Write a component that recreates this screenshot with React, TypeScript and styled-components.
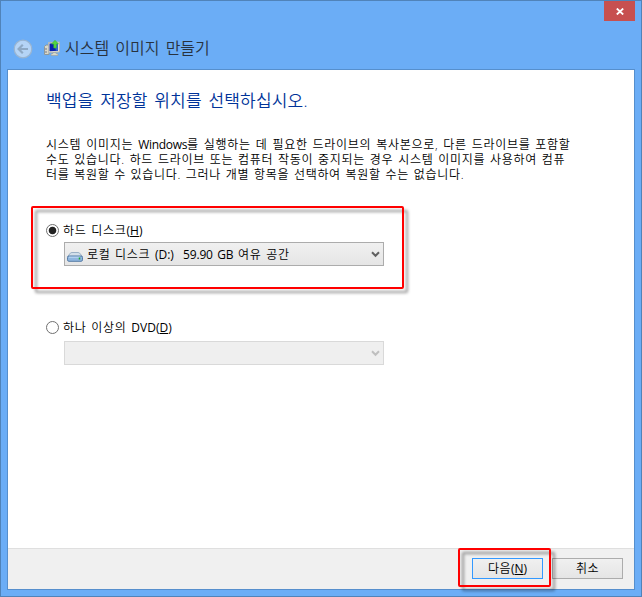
import React from "react";
import styled, { createGlobalStyle } from "styled-components";

const Global = createGlobalStyle`
  * { box-sizing: border-box; }
  body { margin: 0; font-family: "Open Sans", "Noto Sans CJK KR", sans-serif; font-size: 12px; color: #000; }
`;

const Window = styled.div`
  position: relative;
  width: 642px;
  height: 597px;
  display: flex;
  flex-direction: column;
  background: #6badf6;
  border: 1px solid #5083b9;
  padding: 0 6px 6px;
`;

const TitleBar = styled.div`
  height: 20px;
  display: flex;
  justify-content: flex-end;
`;

const CloseButton = styled.button`
  width: 31px;
  height: 20px;
  padding: 0;
  border: 0;
  background: #c75050;
  display: flex;
  align-items: center;
  justify-content: center;
`;

const Header = styled.header`
  height: 48px;
  display: flex;
  align-items: center;
  padding: 8px 0 0 6px;
`;

const BackIcon = styled.svg`
  width: 20px;
  height: 20px;
  flex: none;
  margin-right: 11px;
`;

const AppIcon = styled.svg`
  width: 16px;
  height: 16px;
  flex: none;
  margin: -2px 5px 0 0;
`;

const Line = styled.span<{ $spacing?: number; $word?: number }>`
  display: block;
  white-space: nowrap;
  font-weight: 350;
  letter-spacing: ${(p) => p.$spacing ?? 0.7}px;
  word-spacing: ${(p) => p.$word ?? 1}px;
`;

const Latin = styled.span<{ $spacing?: number }>`
  font-weight: 400;
  letter-spacing: ${(p) => p.$spacing ?? 0}px;
`;

const Title = styled(Line)`
  font-size: 16px;
  line-height: 20px;
  color: #28323e;
  margin-top: -3px;
`;

const Client = styled.main`
  flex: 1;
  display: flex;
  flex-direction: column;
  background: #fff;
  border: 1px solid #568fcd;
`;

const Content = styled.section`
  flex: 1;
  padding: 19px 0 0 38px;
`;

const Heading = styled.h1`
  margin: 0;
  font-size: 17px;
  line-height: 24px;
  color: #003399;
`;

const Description = styled.div`
  margin-top: 24px;
  line-height: 15px;
`;

const Option = styled.div<{ $top: number; $gap: number }>`
  margin-top: ${(p) => p.$top}px;
  display: flex;
  flex-direction: column;
  gap: ${(p) => p.$gap}px;
`;

const OptionLabel = styled.label`
  height: 20px;
  display: flex;
  align-items: center;
  line-height: 20px;
`;

const OptionText = styled(Line)`
  padding-top: 1px;
`;

const Radio = styled.span<{ $checked?: boolean }>`
  width: 13px;
  height: 13px;
  margin-right: 4px;
  border: 1px solid #707070;
  border-radius: 50%;
  background: ${(p) => (p.$checked ? "radial-gradient(circle, #222 3.4px, #fff 4.2px)" : "#fff")};
`;

const Combo = styled.div<{ $disabled?: boolean }>`
  width: 320px;
  height: 24px;
  margin-left: 18px;
  padding: 0 3px 0 2px;
  display: flex;
  align-items: center;
  border: 1px solid ${(p) => (p.$disabled ? "#d9d9d9" : "#acacac")};
  background: ${(p) => (p.$disabled ? "#efefef" : "linear-gradient(#f0f0f0, #e5e5e5)")};
  color: ${(p) => (p.$disabled ? "#bfbfbf" : "#606060")};
`;

const ComboText = styled(Line)`
  color: #000;
  white-space: pre;
  margin-left: 4px;
  padding-top: 2px;
  line-height: 18px;
`;

const Arrow = styled.svg`
  width: 9px;
  height: 8px;
  margin-left: auto;
`;

const Drive = styled.svg`
  width: 16px;
  height: 10px;
  margin-top: 6px;
`;

const Footer = styled.footer`
  height: 41px;
  display: flex;
  justify-content: flex-end;
  gap: 9px;
  padding: 9px 11px 0 0;
  border-top: 1px solid #dfdfdf;
  background: #f0f0f0;
`;

const Button = styled.button<{ $primary?: boolean }>`
  width: 71px;
  height: 21px;
  padding: 0 0 1px;
  display: flex;
  align-items: center;
  justify-content: center;
  font: inherit;
  line-height: 17px;
  color: #000;
  border: 1px solid ${(p) => (p.$primary ? "#3399ff" : "#acacac")};
  background: linear-gradient(#f0f0f0, #e5e5e5);
`;

const Highlight = styled.div<{ $x: number; $y: number; $w: number; $h: number }>`
  position: absolute;
  left: ${(p) => p.$x - 1}px;
  top: ${(p) => p.$y - 1}px;
  width: ${(p) => p.$w}px;
  height: ${(p) => p.$h}px;
  border: 2px solid #f00;
  border-radius: 2px;
  filter: drop-shadow(4px 4px 1.5px rgba(0, 0, 0, 0.42));
  pointer-events: none;
`;

const Chevron = () => (
  <Arrow viewBox="0 0 9 8">
    <path d="M1 2.300 4.500 5.800 8 2.300" fill="none" stroke="currentColor" strokeWidth="2" />
  </Arrow>
);

const DriveIcon = () => (
  <Drive viewBox="0 0 16 10">
    <path d="M.6 4.600 3.300 1.200Q4 .5 5 .5h6q1 0 1.700.7l2.700 3.400Z" fill="#d3dfea" stroke="#9bb0c5" />
    <rect x=".5" y="4" width="15" height="5.300" rx="1.500" fill="#8fb6df" stroke="#577ca6" />
    <path d="M2 5.200h11" stroke="#c1dcf5" />
    <path d="M12.500 5.500v2" stroke="#18a432" strokeWidth="1.500" />
  </Drive>
);

export default function App() {
  return (
    <>
      <Global />
      <Window>
        <TitleBar>
          <CloseButton aria-label="닫기">
            <svg width="8" height="7" viewBox="0 0 8 7">
              <path d="M.8.5 7.200 6.500M7.200.5.8 6.500" stroke="#fff" strokeWidth="1.800" />
            </svg>
          </CloseButton>
        </TitleBar>
        <Header>
          <BackIcon viewBox="0 0 20 20">
            <circle cx="10" cy="10" r="8.800" fill="#b5d4f6" stroke="#9ab5d1" strokeWidth="1.200" />
            <path d="M15 10H6M9.800 5.800 5.600 10l4.200 4.200" fill="none" stroke="#8ea9c5" strokeWidth="2.200" />
          </BackIcon>
          <AppIcon viewBox="0 0 16 16">
            <path d="M.5 6.500 2 5h3v9.500H.5Z" fill="#d9d8c9" stroke="#8e989b" />
            <path d="M1 9h2M1 12h2" stroke="#778" />
            <path d="M4.500 2.500 15.500 2v10l-11 .5Z" fill="#e1e2d9" stroke="#b5b8b2" />
            <path d="M5.500 3.500 14 3.200v7.500l-8.500.6Z" fill="#0921ae" />
            <path d="M10 3.500 14 3.200v7.500l-2 .1Z" fill="#3263d0" />
            <path d="M9 12.500h3v1l2 .5v1.500H7V14l2-.5Z" fill="#d9d8c9" stroke="#999f9c" strokeWidth=".6" />
            <path d="M7.500 4 11 .3 14.500 4h-2.200v4h-2.500V4Z" fill="#55d540" stroke="#35b535" strokeWidth=".6" />
          </AppIcon>
          <Title $spacing={0} $word={2}>시스템 이미지 만들기</Title>
        </Header>
        <Client>
          <Content>
            <Heading><Line $spacing={0.2} $word={2}>백업을 저장할 위치를 선택하십시오.</Line></Heading>
            <Description>
              <Line $word={1.15}>시스템 이미지는 <Latin $spacing={-0.3}>Windows</Latin>를 실행하는 데 필요한 드라이브의 복사본으로, 다른 드라이브를 포함할</Line>
              <Line>수도 있습니다. 하드 드라이브 또는 컴퓨터 작동이 중지되는 경우 시스템 이미지를 사용하여 컴퓨</Line>
              <Line $word={0.9}>터를 복원할 수 있습니다. 그러나 개별 항목을 선택하여 복원할 수는 없습니다.</Line>
            </Description>
            <Option $top={38} $gap={2}>
              <OptionLabel><Radio $checked /><OptionText>하드 디스크<Latin>(<u>H</u>)</Latin></OptionText></OptionLabel>
              <Combo>
                <DriveIcon />
                <ComboText $word={0.8}>로컬 디스크 <Latin>(D:)</Latin>  <Latin $spacing={-0.2}>59.90</Latin> <Latin $spacing={-0.2}>GB</Latin> 여유 공간</ComboText>
                <Chevron />
              </Combo>
            </Option>
            <Option $top={51} $gap={4}>
              <OptionLabel><Radio /><OptionText>하나 이상의 <Latin>DVD(<u>D</u>)</Latin></OptionText></OptionLabel>
              <Combo $disabled><Chevron /></Combo>
            </Option>
          </Content>
          <Footer>
            <Button $primary><Line $spacing={0.5}>다음<Latin>(<u>N</u>)</Latin></Line></Button>
            <Button><Line $spacing={0.5}>취소</Line></Button>
          </Footer>
        </Client>
        <Highlight $x={31} $y={206} $w={373} $h={83} />
        <Highlight $x={458} $y={548} $w={93} $h={39} />
      </Window>
    </>
  );
}
